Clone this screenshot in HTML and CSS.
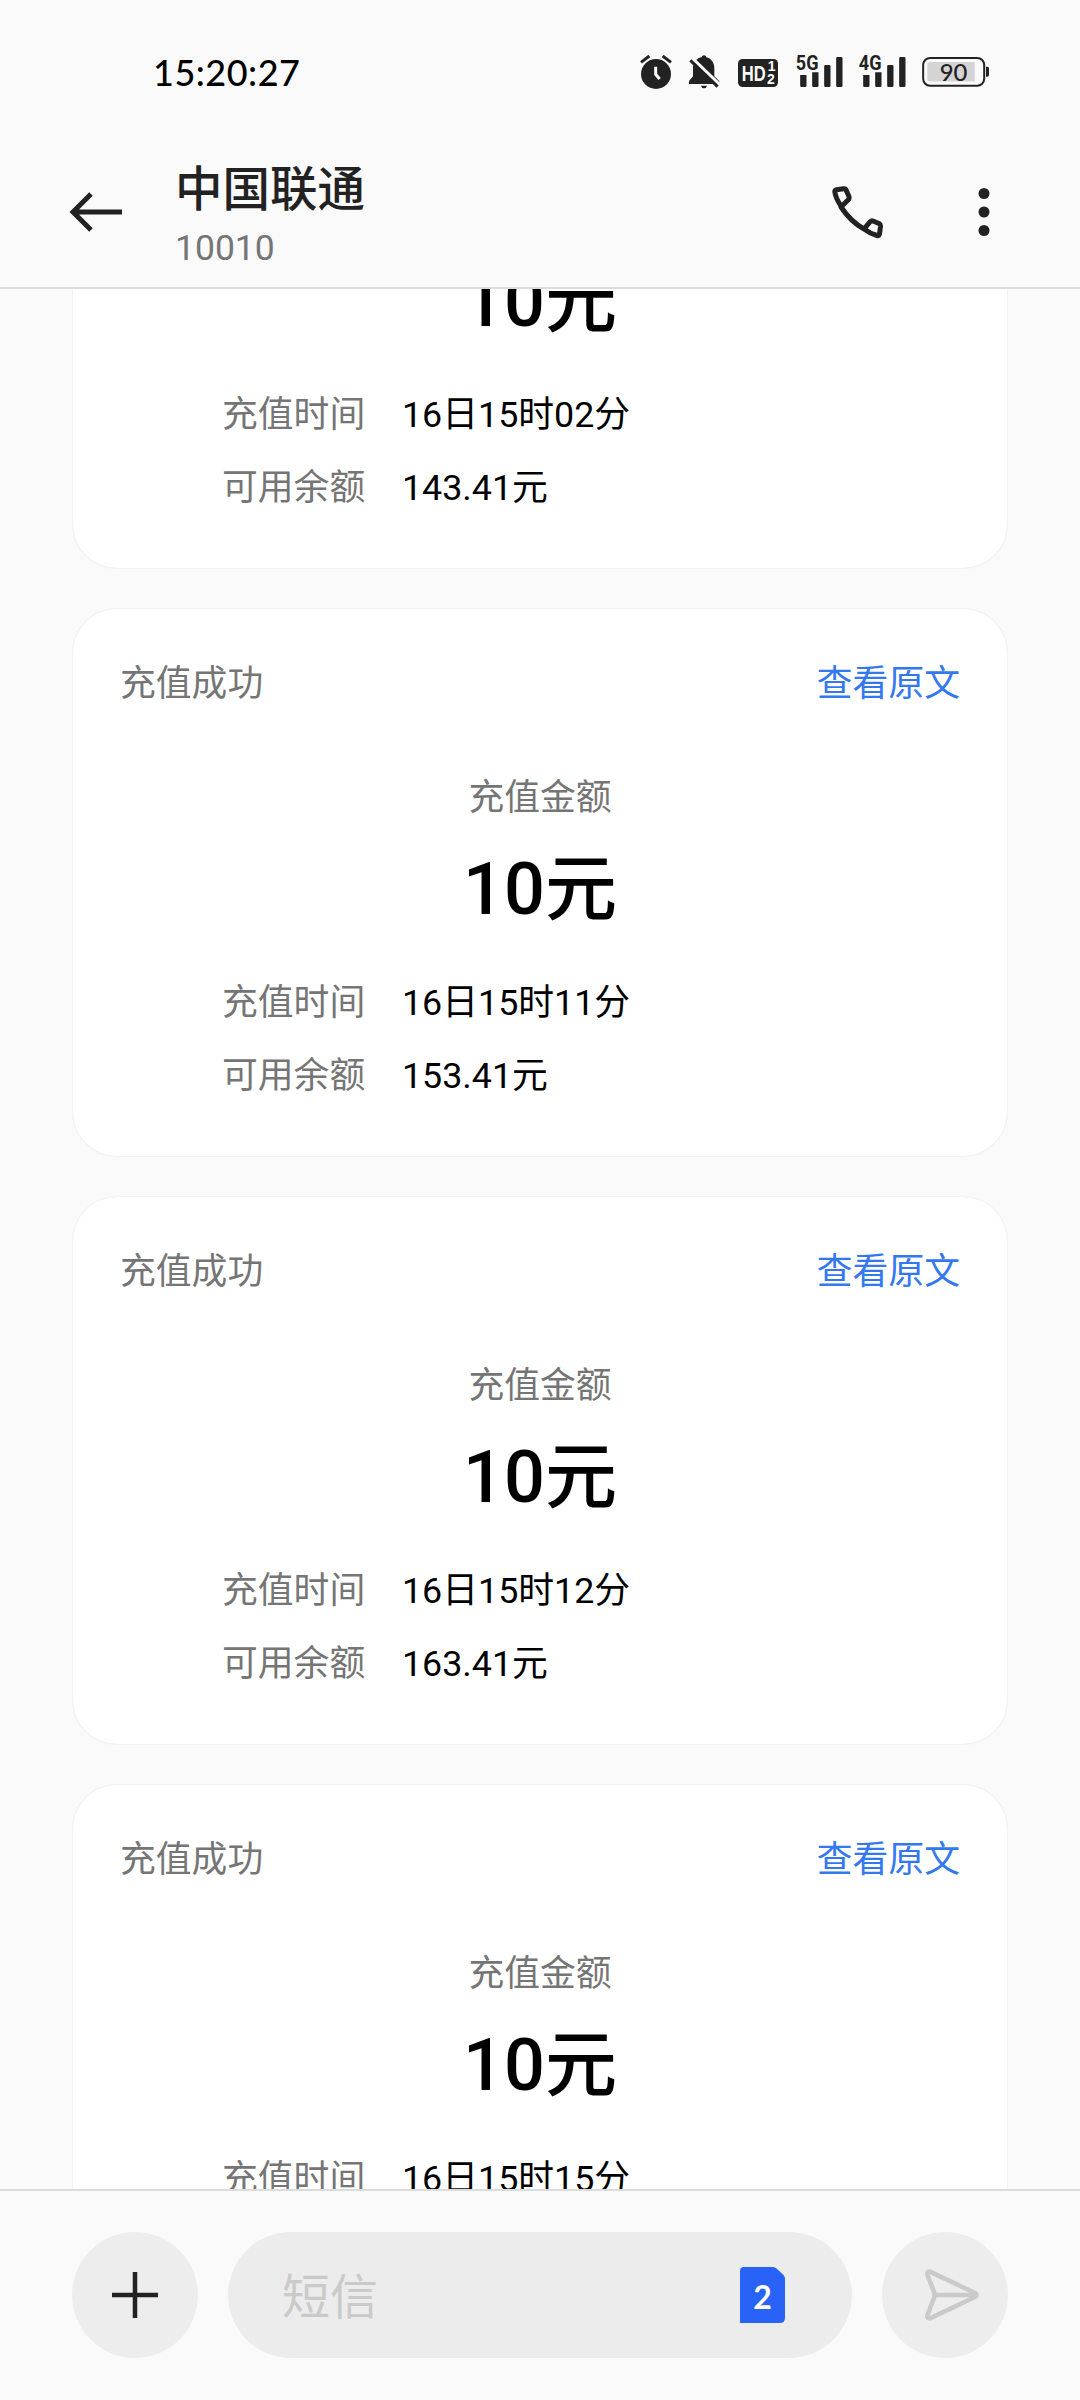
FILE: index.html
```html
<!DOCTYPE html>
<html lang="zh-CN">
<head>
    <meta charset="UTF-8">
    <meta name="viewport" content="width=device-width, initial-scale=1.0">
    <title>中国联通</title>
    <link rel="stylesheet" href="styles.css">
</head>
<body>
    <div class="screen">
        <!-- Status bar -->
        <div class="status-bar">
            <div class="clock">15:20:27</div>
            <div class="status-icons">
                <svg class="icon-small" viewBox="60 42 96 108">
                    <circle cx="108" cy="102" r="45" fill="#222"/>
                    <path d="M63 67 88 48M153 67 128 48" stroke="#222" stroke-width="9" fill="none"/>
                    <path d="M107 80V103L119 117" stroke="#fafafa" stroke-width="9" fill="none"/>
                </svg>
                <svg class="icon-small" viewBox="204 42 96 108">
                    <path d="M207 132V123L219 109V84C219 67 230 54 246 51V49Q252 42 258 49V51C274 55 283 68 283 84V109L298 124V132ZM243 137H261Q259 145 252 145T243 137Z" fill="#222"/>
                    <path d="M218 56 302 137" stroke="#fafafa" stroke-width="10"/>
                    <path d="M211 61 293 140" stroke="#222" stroke-width="9"/>
                </svg>
                <svg class="icon-hd" viewBox="354 42 120 108">
                    <rect x="354" y="57" width="120" height="84" rx="14" fill="#222"/>
                    <text x="365" y="122" class="hd-text" textLength="72" lengthAdjust="spacingAndGlyphs">HD</text>
                    <text x="443" y="94" class="hd-num">1</text>
                    <text x="441" y="131" class="hd-num">2</text>
                </svg>
                <svg class="icon-signal" viewBox="530 42 140 108">
                    <text x="529" y="90" class="net-text" textLength="68" lengthAdjust="spacingAndGlyphs">5G</text>
                    <path d="M542 105h19v32q0 4-4 4h-11q-4 0-4-4ZM578 97h19v40q0 4-4 4h-11q-4 0-4-4ZM614 79q0-4 4-4h11q4 0 4 4v58q0 4-4 4h-11q-4 0-4-4ZM650 55q0-4 4-4h11q4 0 4 4v82q0 4-4 4h-11q-4 0-4-4Z" fill="#222"/>
                </svg>
                <svg class="icon-signal" viewBox="530 42 140 108">
                    <text x="529" y="90" class="net-text" textLength="68" lengthAdjust="spacingAndGlyphs">4G</text>
                    <path d="M542 105h19v32q0 4-4 4h-11q-4 0-4-4ZM578 97h19v40q0 4-4 4h-11q-4 0-4-4ZM614 79q0-4 4-4h11q4 0 4 4v58q0 4-4 4h-11q-4 0-4-4ZM650 55q0-4 4-4h11q4 0 4 4v82q0 4-4 4h-11q-4 0-4-4Z" fill="#222"/>
                </svg>
                <svg class="icon-battery" viewBox="905 42 202 108">
                    <rect x="908.500" y="53.500" width="184" height="84" rx="21" fill="none" stroke="#222" stroke-width="6"/>
                    <path d="M931 66H1064V125H931Q921 125 921 115V76Q921 66 931 66Z" fill="#d4d4d4"/>
                    <path d="M1098 80h4q5 0 5 5v20q0 5-5 5h-4Z" fill="#222"/>
                    <text x="1000" y="122" text-anchor="middle" class="battery-text">90</text>
                </svg>
            </div>
        </div>

        <!-- Conversation header -->
        <header class="header">
            <svg class="back" viewBox="0 0 54 40">
                <path d="M22 2 4 20 22 38M3 20H53" fill="none" stroke="#222" stroke-width="5"/>
            </svg>
            <div class="contact">
                <div class="contact-name">中国联通</div>
                <div class="contact-number">10010</div>
            </div>
            <svg class="phone" viewBox="0 0 52 54">
                <path d="M9 20Q3.500 12 2.800 5.500Q3 4 4.500 3.800L11.500 2.800Q13.500 2.500 14.300 4.500L17 10.500Q17.500 12 16.500 13.500L9 21C15 30 23 38 32 43L38 35.800Q39.500 34.500 41 35L47 37.500Q48.700 38.500 48.500 40.500L47.500 48Q47 50 45 49.500Q38 47.500 32 43" fill="none" stroke="#222" stroke-width="5" stroke-linejoin="round"/>
            </svg>
            <svg class="more" viewBox="0 0 12 48">
                <circle cx="6" cy="5.500" r="5.500" fill="#222"/>
                <circle cx="6" cy="24" r="5.500" fill="#222"/>
                <circle cx="6" cy="42.500" r="5.500" fill="#222"/>
            </svg>
        </header>

        <!-- Message list -->
        <main class="messages">
            <div class="card">
                <div class="card-head"><span>充值成功</span><a class="link">查看原文</a></div>
                <div class="amount-label">充值金额</div>
                <div class="amount">10元</div>
                <div class="row"><span class="label">充值时间</span><span>16日15时02分</span></div>
                <div class="row"><span class="label">可用余额</span><span>143.41元</span></div>
            </div>
            <div class="card">
                <div class="card-head"><span>充值成功</span><a class="link">查看原文</a></div>
                <div class="amount-label">充值金额</div>
                <div class="amount">10元</div>
                <div class="row"><span class="label">充值时间</span><span>16日15时11分</span></div>
                <div class="row"><span class="label">可用余额</span><span>153.41元</span></div>
            </div>
            <div class="card">
                <div class="card-head"><span>充值成功</span><a class="link">查看原文</a></div>
                <div class="amount-label">充值金额</div>
                <div class="amount">10元</div>
                <div class="row"><span class="label">充值时间</span><span>16日15时12分</span></div>
                <div class="row"><span class="label">可用余额</span><span>163.41元</span></div>
            </div>
            <div class="card">
                <div class="card-head"><span>充值成功</span><a class="link">查看原文</a></div>
                <div class="amount-label">充值金额</div>
                <div class="amount">10元</div>
                <div class="row"><span class="label">充值时间</span><span>16日15时15分</span></div>
            </div>
        </main>

        <!-- Compose bar -->
        <footer class="compose">
            <div class="round-btn">
                <svg class="plus" viewBox="0 0 46 46"><path d="M23 0V46M0 23H46" stroke="#222" stroke-width="4.500"/></svg>
            </div>
            <div class="input">
                <span class="placeholder">短信</span>
                <svg class="sim" viewBox="0 0 45 56">
                    <path d="M4 0H33Q35 0 36.500 1.500L43.500 8Q45 9.500 45 11.500V51Q45 56 40 56H0V4Q0 0 4 0Z" fill="#2962f6"/>
                    <text x="22.500" y="42" text-anchor="middle" class="sim-text">2</text>
                </svg>
            </div>
            <div class="round-btn">
                <svg class="send" viewBox="0 0 54 52">
                    <path d="M5.500 2.800 50 24Q53 26 50 28L5.500 49.200Q1.500 50 2.500 46L9 29Q10 26 9 23L2.500 6Q1.500 2 5.500 2.800ZM10 26H50" fill="none" stroke="#cacaca" stroke-width="4.600" stroke-linejoin="round"/>
                </svg>
            </div>
        </footer>
    </div>
</body>
</html>
```
FILE: styles.css
```css
* {
    box-sizing: border-box;
}
body {
    margin: 0;
    background-color: #fafafa;
    font-family: Roboto, "Noto Sans CJK SC", sans-serif;
    color: #000;
}
svg {
    display: block;
    flex: none;
}
.screen {
    width: 1080px;
    height: 2400px;
    display: flex;
    flex-direction: column;
    overflow: hidden;
}
.status-bar {
    height: 144px;
    padding: 0 91px 0 153px;
    display: flex;
    align-items: center;
    justify-content: space-between;
}
.clock {
    font-family: Lato, sans-serif;
    font-size: 36px;
    font-weight: 500;
    line-height: 44px;
    letter-spacing: 0.5px;
}
.status-icons {
    display: flex;
    gap: 16px;
}
.icon-small {
    width: 32px;
    height: 36px;
}
.icon-hd {
    width: 40px;
    height: 36px;
    margin: 0 2px;
}
.icon-signal {
    width: 47px;
    height: 36px;
}
.icon-battery {
    width: 67px;
    height: 36px;
}
.hd-text {
    font: bold 66px "Liberation Sans", sans-serif;
    fill: #fafafa;
}
.hd-num {
    font: bold 42px "Liberation Sans", sans-serif;
    fill: #fafafa;
}
.net-text {
    font: bold 60px Roboto, sans-serif;
    fill: #222;
}
.battery-text {
    font: 500 72px Lato, sans-serif;
    fill: #222;
}
.header {
    height: 145px;
    padding: 0 85px 0 69px;
    display: flex;
    border-bottom: 2px solid #dcdcdc;
}
.back {
    width: 54px;
    height: 40px;
    margin-top: 48px;
}
.contact {
    flex: 1;
    margin-left: 52px;
    padding-top: 16px;
}
.contact-name {
    font-size: 47.500px;
    font-weight: 500;
    line-height: 60px;
    color: #222;
}
.contact-number {
    margin-top: 7px;
    font-size: 35.500px;
    line-height: 42px;
    color: #757575;
}
.phone {
    width: 52px;
    height: 54px;
    margin: 42px 94px 0 0;
}
.more {
    width: 12px;
    height: 48px;
    margin: 44px 5px 0 0;
}
.messages {
    height: 1900px;
    padding: 0 73px;
    overflow: hidden;
    font-size: 35.800px;
}
.card {
    height: 547px;
    margin-bottom: 41px;
    padding: 54px 47px 0;
    background-color: #fff;
    border-radius: 44px;
    box-shadow: 0 0 2px rgba(0, 0, 0, 0.12);
}
/* the list is scrolled, the first card starts under the header */
.card:first-child {
    margin-top: -268px;
}
.card-head {
    display: flex;
    justify-content: space-between;
    line-height: 42px;
    color: #757575;
}
.link {
    color: #3478f0;
}
.amount-label {
    margin-top: 72px;
    line-height: 42px;
    text-align: center;
    color: #757575;
}
.amount {
    margin-top: 26px;
    font-size: 72px;
    font-weight: 500;
    line-height: 90px;
    text-align: center;
}
.row {
    display: flex;
    gap: 36px;
    margin-top: 31px;
    padding-left: 102px;
    line-height: 42px;
}
.amount + .row {
    margin-top: 47px;
}
.label {
    width: 144px;
    color: #757575;
}
.compose {
    height: 211px;
    padding: 41px 72px 0;
    display: flex;
    gap: 30px;
    border-top: 2px solid #dcdcdc;
}
.round-btn {
    width: 126px;
    height: 126px;
    flex: none;
    display: flex;
    align-items: center;
    justify-content: center;
    border-radius: 50%;
    background-color: #ededed;
}
.plus {
    width: 46px;
    height: 46px;
}
.input {
    flex: 1;
    height: 126px;
    padding: 0 67px 0 54px;
    display: flex;
    align-items: center;
    justify-content: space-between;
    border-radius: 63px;
    background-color: #ececec;
}
.placeholder {
    padding-top: 6px;
    font-size: 48px;
    line-height: 60px;
    color: #cacaca;
}
.sim {
    width: 45px;
    height: 56px;
}
.sim-text {
    font: bold 32px Lato, sans-serif;
    fill: #fff;
}
.send {
    width: 54px;
    height: 52px;
    margin-left: 14px;
}
```
